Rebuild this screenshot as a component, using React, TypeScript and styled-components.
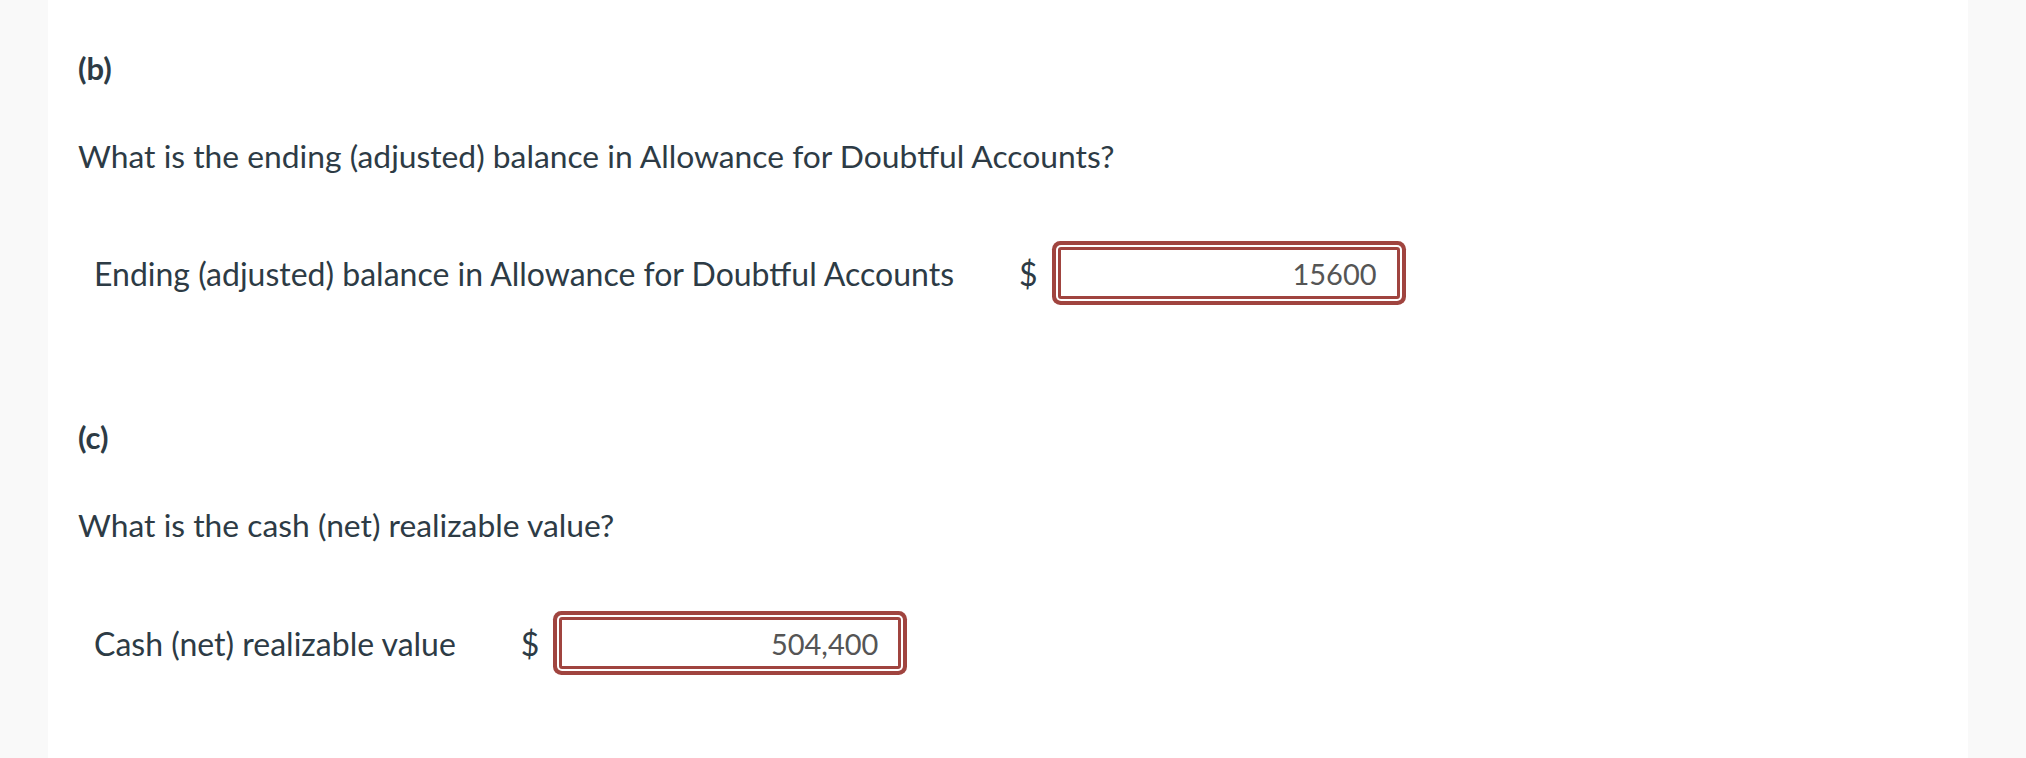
import styled, { createGlobalStyle } from 'styled-components';

const GlobalStyle = createGlobalStyle`
  html, body {
    margin: 0;
    padding: 0;
    background: #f9f9f9;
  }
  body {
    font-family: Lato, "Noto Sans", sans-serif;
    color: #2d3b45;
  }
`;

const Page = styled.div`
  display: grid;
  grid-template-columns: 48px 1920px 1fr;
  height: 758px;
  overflow: hidden;
`;

const Gutter = styled.div`
  background: #f9f9f9;
`;

const Main = styled.main`
  background: #ffffff;
  padding: 40px 30px 0;
  display: flex;
  flex-direction: column;
`;

const Part = styled.h3<{ $top?: number }>`
  margin: ${(p) => p.$top ?? 0}px 0 0;
  font-size: 31px;
  font-weight: 700;
  line-height: 56px;
`;

const Question = styled.p<{ $top: number }>`
  margin: ${(p) => p.$top}px 0 0;
  font-size: 31.8px;
  line-height: 44px;
`;

const Row = styled.div<{ $top: number }>`
  display: flex;
  align-items: center;
  margin-top: ${(p) => p.$top}px;
  padding-left: 16px;
`;

const Label = styled.span`
  font-size: 32px;
  margin-right: 65px;
`;

const Dollar = styled.span`
  font-size: 32px;
  margin-right: 14px;
`;

const Field = styled.div`
  width: 342px;
  height: 52px;
  margin: 6px;
  box-sizing: border-box;
  border: 3px solid #a0443f;
  border-radius: 3px;
  box-shadow: 0 0 0 2px #ffffff, 0 0 0 6px #a0443f;
  display: flex;
  align-items: center;
  justify-content: flex-end;
  padding-right: 20px;
  font-size: 29px;
  color: #555555;
  background: #fff;
`;

type AnswerProps = { label: string; value: string; top: number };

const Answer = ({ label, value, top }: AnswerProps) => (
  <Row $top={top}>
    <Label>{label}</Label>
    <Dollar>$</Dollar>
    <Field>{value}</Field>
  </Row>
);

export default function App() {
  return (
    <>
      <GlobalStyle />
      <Page>
        <Gutter />
        <Main>
          <Part>(b)</Part>
          <Question $top={38}>What is the ending (adjusted) balance in Allowance for Doubtful Accounts?</Question>
          <Answer top={63} label="Ending (adjusted) balance in Allowance for Doubtful Accounts" value="15600" />
          <Part $top={104}>(c)</Part>
          <Question $top={38}>What is the cash (net) realizable value?</Question>
          <Answer top={64} label="Cash (net) realizable value" value="504,400" />
        </Main>
        <Gutter />
      </Page>
    </>
  );
}
